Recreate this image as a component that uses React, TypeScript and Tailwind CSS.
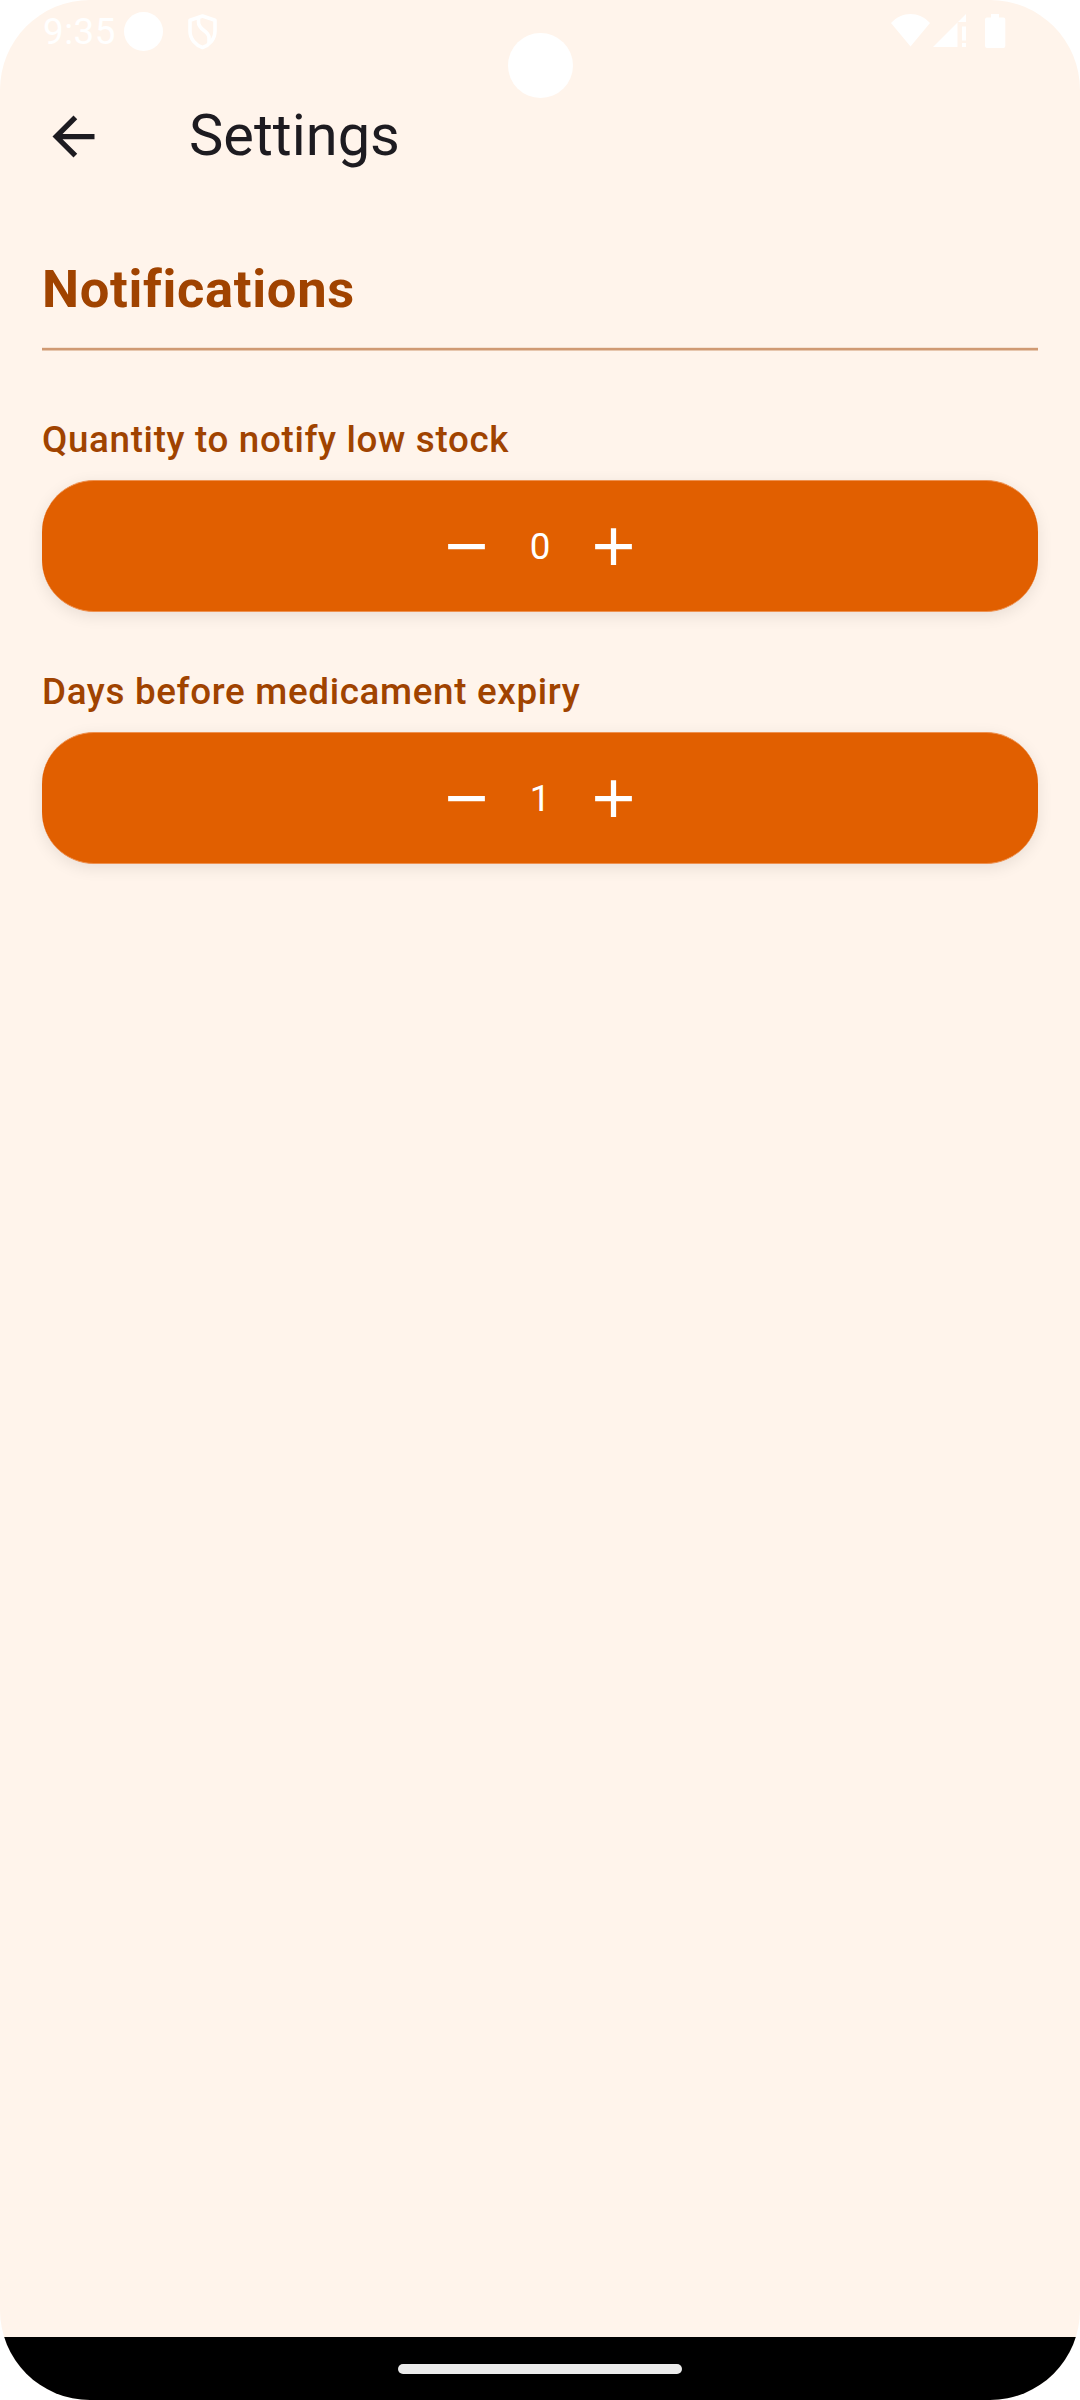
import React from "react";

function StatusBar() {
  return (
    <header className="flex h-[63px] items-start justify-between pl-[43px] pr-[74px] text-white">
      <div className="flex">
        <span className="w-[81px] pt-[10px] text-[36.75px] leading-[43px] tracking-[0.5px]">9:35</span>
        <span className="mt-3 size-[39px] rounded-full bg-white" />
        <svg className="ml-[25px] mt-[14px]" width="29" height="36" viewBox="0 0 29 36" fill="none" stroke="white" strokeWidth="3.6" strokeLinejoin="round">
          <path d="M14.5 2 L27 6.3 V17 C27 25 21.5 31 14.5 33.5 C7.5 31 2 25 2 17 V6.3 Z" />
          <path d="M10.5 4 V8 C10.5 17 21 16 21 24 V29" />
        </svg>
      </div>
      <div className="flex pt-[14px]">
        <svg width="39" height="33" viewBox="0 0 39 33" fill="white">
          <path d="M0 9 C11 -3 28 -3 39 9 L19.500 32.500 Z" />
        </svg>
        <svg className="ml-[3px]" width="33" height="33" viewBox="0 0 33 33" fill="white">
          <path d="M0 33 L33 0 V8 H24.500 V33 Z" />
          <rect x="29" y="12.500" width="4" height="14" />
          <rect x="29" y="29" width="4" height="4" />
        </svg>
        <svg className="ml-[19px]" width="21" height="34" viewBox="0 0 21 34" fill="white">
          <path d="M6 0 H14 V3.500 H18.500 Q20.300 3.500 20.300 5.500 V32 Q20.300 34 18.500 34 H2 Q0 34 0 32 V5.500 Q0 3.500 2 3.500 H6 Z" />
        </svg>
      </div>
    </header>
  );
}

function Stepper({ label, value }: { label: string; value: number }) {
  return (
    <section>
      <h3 className="h-[62px] text-[36.75px] font-medium leading-[43px] tracking-[0.67px] text-[#a04300]">{label}</h3>
      <div className="flex h-[132px] items-center justify-center rounded-[52px] border-y border-[#ee9150] bg-[#e15f00] text-white shadow-[0_4px_16px_rgba(0,0,0,0.09)]">
        <button aria-label="Decrease">
          <svg width="63" height="63" viewBox="0 0 24 24" fill="currentColor">
            <path d="M5 11h14v2H5z" />
          </svg>
        </button>
        <span className="w-[84px] text-center text-[36.75px] leading-[43px]">{value}</span>
        <button aria-label="Increase">
          <svg width="63" height="63" viewBox="0 0 24 24" fill="currentColor">
            <path d="M19 13h-6v6h-2v-6H5v-2h6V5h2v6h6z" />
          </svg>
        </button>
      </div>
    </section>
  );
}

export default function App() {
  return (
    <div className="bg-white">
      <div className="relative flex h-[2400px] w-[1080px] flex-col overflow-hidden rounded-[90px] bg-[#fff4eb] font-[Roboto,sans-serif]">
        <StatusBar />
        <span className="absolute left-[508px] top-[33px] size-[65px] rounded-full bg-white" />
        <div className="flex h-[147px] items-center pl-[42px] text-[#1d1b20]">
          <button aria-label="Back">
            <svg width="63" height="63" viewBox="0 0 24 24" fill="currentColor">
              <path d="M7.825 13l5.600 5.600L12 20l-8-8 8-8 1.425 1.400L7.825 11H20v2z" />
            </svg>
          </button>
          <h1 className="mb-[3px] ml-[84px] text-[57.75px] leading-[73px]">Settings</h1>
        </div>
        <main className="flex flex-1 flex-col px-[42px] pt-[42px]">
          <h2 className="h-[95px] text-[52.5px] font-bold leading-[74px] tracking-[0.67px] text-[#a04300]">Notifications</h2>
          <div className="h-1 shrink-0 border-y border-b-[#e7c7ae] border-t-[#f6e3d3] bg-[#d09a73]" />
          <div className="flex flex-col gap-[58px] pt-[67px]">
            <Stepper label="Quantity to notify low stock" value={0} />
            <Stepper label="Days before medicament expiry" value={1} />
          </div>
        </main>
        <footer className="flex h-[63px] items-start justify-center bg-black pt-[27px]">
          <span className="h-[10px] w-[284px] rounded-full bg-[#ebebeb]" />
        </footer>
      </div>
    </div>
  );
}
